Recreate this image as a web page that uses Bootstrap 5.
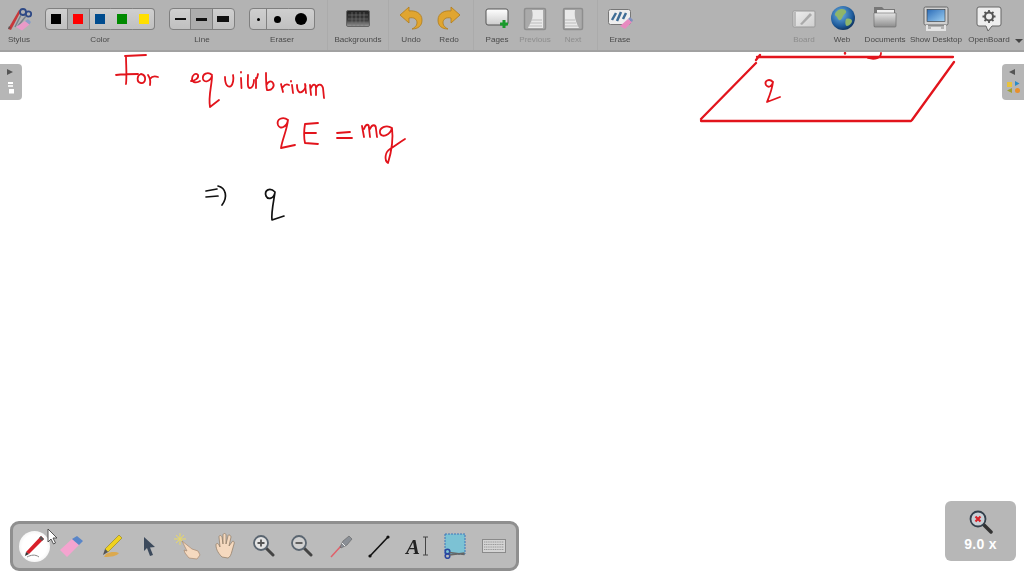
<!DOCTYPE html>
<html lang="en">
<head>
<meta charset="utf-8">
<title>OpenBoard</title>
<link href="https://cdn.jsdelivr.net/npm/bootstrap@5.3.0/dist/css/bootstrap.min.css" rel="stylesheet">
<style>
html,body{height:100%;margin:0;overflow:hidden;background:#fff}
body{font-family:"Liberation Sans",Arial,sans-serif}
.ob-stage{width:1024px;height:576px;position:relative}
.ob-top{height:52px;background:#b3b3b3;border-bottom:2px solid #a1a1a1}
.ob-tool{flex:0 0 auto;width:38px}
.ob-w60{width:60px}.ob-w48{width:48px}.ob-w54{width:54px}.ob-w52{width:52px}.ob-w110{width:110px}.ob-w66{width:66px}
.ob-slot{height:30px;margin-top:4px;display:flex;align-items:center;justify-content:center}
.ob-label{font-size:8.1px;line-height:12px;color:#4a4a4a;white-space:nowrap;text-align:center;filter:blur(.25px)}
.ob-off{color:#8d8d8d}
.ob-sep{flex:0 0 1px;height:50px;background:#ababab}
.ob-ml7{margin-left:7px}.ob-ml14{margin-left:14px}.ob-ml12{margin-left:12px}.ob-ml3{margin-left:3px}.ob-ml4{margin-left:4px}.ob-ml5{margin-left:5px}
.ob-seg{height:22px;padding:0;display:flex;align-items:center;justify-content:center;flex:1 1 0;border:1px solid #808080;background:linear-gradient(#cfcfcf,#c0c0c0);border-radius:4px;--bs-btn-active-bg:#adadad;--bs-btn-active-border-color:#808080}
.ob-seg.active{background:#adadad;border-color:#808080}
.ob-plain{border-left-color:transparent}
.btn-group>.ob-mid{border-right-color:transparent}
.ob-sw{display:block;width:10px;height:10px}
.ob-k{background:#000}.ob-r{background:#f00}.ob-b{background:#004c8f}.ob-g{background:#008a00}.ob-y{background:#ffdf00}
.ob-ln{display:block;width:11px;background:#111}
.ob-l1{height:2px}.ob-l2{height:3px}.ob-l3{height:6px;width:12px}
.ob-dot{display:block;border-radius:50%;background:#000}
.ob-d1{width:3px;height:3px}.ob-d2{width:7px;height:7px}.ob-d3{width:12px;height:12px}
.ob-more{flex:0 0 9px;padding-top:38px}
.ob-canvas{position:absolute;left:0;top:52px}
.ob-tab{position:absolute;top:64px;width:22px;height:36px;background:#b6b6b6}
.ob-tab-l{left:0;border-radius:0 4px 4px 0}
.ob-tab-r{right:0;border-radius:4px 0 0 4px}
.ob-dock{position:absolute;left:10px;top:521px;width:509px;height:50px;background:#bbb;border:3px solid #8f8f8f;border-radius:9px;padding-left:2px}
.ob-dtool{flex:0 0 38.3px;height:100%}
.ob-sel{width:31px;height:31px;border-radius:50%;background:radial-gradient(#fff 55%,#e4e4e4)}
.ob-cursor{position:absolute;left:47px;top:528px}
.ob-zoom{position:absolute;left:945px;top:501px;width:71px;height:60px;background:#b7b7b7;border-radius:6px;color:#fff;font-weight:700;font-size:14px}
.ob-zval{line-height:16px;margin-top:1px;letter-spacing:.3px}
.ob-soft{filter:blur(.35px)}
.ob-ink{filter:blur(.2px)}
</style>
</head>
<body>
<div class="ob-stage">
  <svg class="ob-canvas ob-ink" width="1024" height="524" viewBox="0 52 1024 524" fill="none" stroke-linecap="round" stroke-linejoin="round" role="img" aria-label="Handwritten ink on the board">
    <g stroke="#e2141c" stroke-width="1.800">
      <path d="M125 56L146 55M126 56C126 65 127 75 126 84M116 75Q125 74 138 74"/>
      <path d="M141 74C137 75 136 82 141 83C146 84 147 75 141 74M148 75C150 78 151 80 150 85M150 79C152 76 155 76 158 77"/>
      <path d="M191 81C195 81 199 78 198 75C196 72 192 75 192 79C192 83 197 83 200 81"/>
      <path d="M212 75C208 71 202 74 203 79C204 83 210 82 212 76C212 85 208 96 210 107L219 100"/>
      <path d="M225 77C225 85 228 88 231 86C233 84 234 79 233 75"/>
      <path d="M241 78L241.500 88M241 72L241 72.500M248 75C248 82 247 88 250 88C252 88 254 85 254 80M256 78L256 88M258 74L257 78"/>
      <path d="M266 73C266 80 266 86 267 90C272 91 275 86 273 83C271 80 268 82 267 84"/>
      <path d="M281 84L283 92M283 87C285 84 287 84 289 85M292 85L293 93M291 81L291 81.500"/>
      <path d="M297 85C297 92 300 94 303 91C305 89 306 86 305 84L306 93"/>
      <path d="M310 85L311 95M311 88C313 83 316 84 316 88L316 95M316 88C318 83 322 84 323 88L324 98"/>
      <path d="M288 120C283 116 276 119 278 125C280 130 287 127 288 120C287 130 282 140 281 148L295 145"/>
      <path d="M318 123L305 124C304 130 304 138 305 143L318 144M305 133L316 133"/>
      <path d="M337 133L350 132M337 138L352 138"/>
      <path d="M362 126L364 137M364 129C366 123 369 124 369 128L370 137M370 129C372 124 376 124 376 129L377 137"/>
      <path d="M392 128C386 124 379 128 380 133C381 138 390 136 392 128C393 136 392 150 388 163C384 160 385 152 390 149C395 146 400 142 405 139"/>
      <path d="M773 82C769 78 764 81 766 85C768 88 772 87 773 82C772 90 769 97 767 102L780 97"/>
      <path d="M881 53C881 58 875 60 868 58"/>
      <path d="M845 53L845 53.500" stroke-width="2.400"/>
      <path stroke-width="2.300" d="M757 57L953 57M756 63L701 119M701 121L911 121M954 62L912 120M760 55L756 60"/>
    </g>
    <g stroke="#111" stroke-width="1.700">
      <path d="M206 191L217 189M206 197L218 196M218 186C226 188 228 197 222 205"/>
      <path d="M275 192C270 187 264 190 266 196C268 200 274 199 275 192C274 200 271 212 272 220L284 216"/>
    </g>
  </svg>

  <nav class="ob-top d-flex align-items-start">
    <div class="ob-tool d-flex flex-column align-items-center">
      <div class="ob-slot"><svg class="ob-soft" width="26" height="26" viewBox="0 0 26 26"><path d="M2 23L13 4l2 1L5 24z" fill="#c8383a"/><path d="M2 23l1-3 2 2z" fill="#555"/><circle cx="17" cy="6" r="3" fill="none" stroke="#2f4a86" stroke-width="1.800"/><circle cx="22.500" cy="8" r="2.700" fill="none" stroke="#2f4a86" stroke-width="1.800"/><path d="M15 9l-6 12M20 10l-8 10" stroke="#77808c" stroke-width="1.500"/><path d="M10 21l9-6 4.500 3.500-7.500 6z" fill="#e99ac8"/><path d="M19 15l3-2 3 3-1.500 2.500z" fill="#8a9ec8"/></svg></div>
      <div class="ob-label">Stylus</div>
    </div>
    <div class="ob-tool ob-w110 ob-ml7 d-flex flex-column align-items-center">
      <div class="ob-slot w-100"><div class="btn-group w-100" role="group" aria-label="Color">
        <button class="btn ob-seg" type="button" aria-label="Black"><span class="ob-sw ob-k"></span></button>
        <button class="btn ob-seg active" type="button" aria-label="Red"><span class="ob-sw ob-r"></span></button>
        <button class="btn ob-seg ob-mid" type="button" aria-label="Blue"><span class="ob-sw ob-b"></span></button>
        <button class="btn ob-seg ob-mid ob-plain" type="button" aria-label="Green"><span class="ob-sw ob-g"></span></button>
        <button class="btn ob-seg ob-plain" type="button" aria-label="Yellow"><span class="ob-sw ob-y"></span></button>
      </div></div>
      <div class="ob-label">Color</div>
    </div>
    <div class="ob-tool ob-w66 ob-ml14 d-flex flex-column align-items-center">
      <div class="ob-slot w-100"><div class="btn-group w-100" role="group" aria-label="Line">
        <button class="btn ob-seg" type="button" aria-label="Thin"><span class="ob-ln ob-l1"></span></button>
        <button class="btn ob-seg active" type="button" aria-label="Medium"><span class="ob-ln ob-l2"></span></button>
        <button class="btn ob-seg" type="button" aria-label="Thick"><span class="ob-ln ob-l3"></span></button>
      </div></div>
      <div class="ob-label">Line</div>
    </div>
    <div class="ob-tool ob-w66 ob-ml14 d-flex flex-column align-items-center">
      <div class="ob-slot w-100"><div class="btn-group w-100" role="group" aria-label="Eraser">
        <button class="btn ob-seg" type="button" aria-label="Small"><span class="ob-dot ob-d1"></span></button>
        <button class="btn ob-seg ob-mid" type="button" aria-label="Medium"><span class="ob-dot ob-d2"></span></button>
        <button class="btn ob-seg ob-plain" type="button" aria-label="Large"><span class="ob-dot ob-d3"></span></button>
      </div></div>
      <div class="ob-label">Eraser</div>
    </div>
    <div class="ob-sep ob-ml12"></div>
    <div class="ob-tool ob-w60 d-flex flex-column align-items-center">
      <div class="ob-slot"><svg class="ob-soft" width="26" height="20" viewBox="0 0 26 20"><defs><linearGradient id="bgk" x1="0" y1="0" x2="0" y2="1"><stop offset="0" stop-color="#222"/><stop offset=".6" stop-color="#3c3c3c"/><stop offset="1" stop-color="#9a9a9a"/></linearGradient></defs><rect x="1.500" y="1.500" width="23" height="16" rx="1.500" fill="url(#bgk)" stroke="#666"/><path d="M3 6h20M3 10h20M3 14h20M7 3v14M11 3v14M15 3v14M19 3v14" stroke="#777" stroke-width=".6"/></svg></div>
      <div class="ob-label">Backgrounds</div>
    </div>
    <div class="ob-sep"></div>
    <div class="ob-tool ob-ml3 d-flex flex-column align-items-center">
      <div class="ob-slot"><svg class="ob-soft" width="24" height="26" viewBox="0 0 24 26"><path d="M10 1L1 9l9 8v-5c5-1 8 1 8 5 0 3-3 5-5 6 6 0 10-3 10-9 0-7-7-10-13-9z" fill="#e0a530" stroke="#b07c1c" stroke-width=".8"/></svg></div>
      <div class="ob-label">Undo</div>
    </div>
    <div class="ob-tool d-flex flex-column align-items-center">
      <div class="ob-slot"><svg class="ob-soft" width="24" height="26" viewBox="0 0 24 26"><path d="M14 1l9 8-9 8v-5c-5-1-8 1-8 5 0 3 3 5 5 6-6 0-10-3-10-9 0-7 7-10 13-9z" fill="#e0a530" stroke="#b07c1c" stroke-width=".8"/></svg></div>
      <div class="ob-label">Redo</div>
    </div>
    <div class="ob-sep ob-ml5"></div>
    <div class="ob-tool ob-ml4 d-flex flex-column align-items-center">
      <div class="ob-slot"><svg class="ob-soft" width="26" height="24" viewBox="0 0 26 24"><defs><linearGradient id="pg" x1="0" y1="0" x2="0" y2="1"><stop offset="0" stop-color="#fff"/><stop offset="1" stop-color="#ccc"/></linearGradient></defs><rect x="2" y="2" width="22" height="16" rx="2" fill="url(#pg)" stroke="#555"/><path d="M18.500 13h3v2.500H24v3h-2.500V21h-3v-2.500H16v-3h2.500z" fill="#1a9a2c"/></svg></div>
      <div class="ob-label">Pages</div>
    </div>
    <div class="ob-tool d-flex flex-column align-items-center">
      <div class="ob-slot"><svg class="ob-soft" width="24" height="24" viewBox="0 0 24 24"><rect x="1.500" y="1.500" width="21" height="21" rx="1.500" fill="#aaa" stroke="#8e8e8e" stroke-width="1.500"/><path d="M9 3h11v18H5c3-6 6-10 4-18z" fill="#e9e9e9"/><path d="M8 13h11M7 16h12M6 19h13" stroke="#bbb"/></svg></div>
      <div class="ob-label ob-off">Previous</div>
    </div>
    <div class="ob-tool d-flex flex-column align-items-center">
      <div class="ob-slot"><svg class="ob-soft" width="22" height="24" viewBox="0 0 22 24"><rect x="1.500" y="1.500" width="19" height="21" rx="1.500" fill="#aaa" stroke="#8e8e8e" stroke-width="1.500"/><path d="M3 3h10c-1 7 1 12 4 18H3z" fill="#e9e9e9"/><path d="M3 13h10M3 16h11M3 19h13" stroke="#bbb"/></svg></div>
      <div class="ob-label ob-off">Next</div>
    </div>
    <div class="ob-sep ob-ml5"></div>
    <div class="ob-tool ob-ml3 d-flex flex-column align-items-center">
      <div class="ob-slot"><svg class="ob-soft" width="26" height="22" viewBox="0 0 26 22"><rect x="1.500" y="1.500" width="22" height="15" rx="2" fill="#eee" stroke="#777"/><path d="M5 12l4-7M10 13l4-9M16 11l3-6" stroke="#3f6d96" stroke-width="2.500"/><path d="M13 18l8-7 4 3-7 7z" fill="#e88ac0"/><path d="M21 11l2-2 3 3-1 2z" fill="#7f8fc0"/></svg></div>
      <div class="ob-label">Erase</div>
    </div>

    <div class="ob-tool ms-auto d-flex flex-column align-items-center">
      <div class="ob-slot"><svg class="ob-soft" width="24" height="20" viewBox="0 0 24 20"><defs><linearGradient id="bd" x1="0" y1="0" x2="1" y2="1"><stop offset="0" stop-color="#eee"/><stop offset="1" stop-color="#cfcfcf"/></linearGradient></defs><rect x="1" y="2" width="22" height="16" rx="1" fill="url(#bd)" stroke="#999"/><path d="M8 15L18 4l2 2-10 10z" fill="#aaa"/><path d="M3 3v14" stroke="#bbb" stroke-width="2"/></svg></div>
      <div class="ob-label ob-off">Board</div>
    </div>
    <div class="ob-tool d-flex flex-column align-items-center">
      <div class="ob-slot"><svg class="ob-soft" width="26" height="26" viewBox="-1 1 26 26"><defs><radialGradient id="gl" cx=".4" cy=".35" r=".7"><stop offset="0" stop-color="#6eb2e6"/><stop offset=".7" stop-color="#1f5c9c"/><stop offset="1" stop-color="#0c2c55"/></radialGradient></defs><circle cx="13" cy="13" r="12" fill="url(#gl)"/><path d="M7 6c4-3 8-2 9 0s-2 3-3 5-2 5-4 4-1-3-3-4-1-3 1-5zM16 14c3-1 6 0 6 2s-3 5-5 5-2-5-1-7z" fill="#8fb56a"/></svg></div>
      <div class="ob-label">Web</div>
    </div>
    <div class="ob-tool ob-w48 d-flex flex-column align-items-center">
      <div class="ob-slot"><svg class="ob-soft" width="26" height="24" viewBox="0 3 26 24"><defs><linearGradient id="fd" x1="0" y1="0" x2="0" y2="1"><stop offset="0" stop-color="#e4e4e4"/><stop offset="1" stop-color="#8d8d8d"/></linearGradient></defs><path d="M2 3h8l2 2h11v18H2z" fill="#777"/><path d="M5 6h17v6H5z" fill="#f0f0f0"/><path d="M2 9h22v13a1 1 0 0 1-1 1H3a1 1 0 0 1-1-1z" fill="url(#fd)" stroke="#666" stroke-width=".6"/></svg></div>
      <div class="ob-label">Documents</div>
    </div>
    <div class="ob-tool ob-w54 d-flex flex-column align-items-center">
      <div class="ob-slot"><svg class="ob-soft" width="26" height="26" viewBox="0 0 26 26"><defs><linearGradient id="sc" x1="0" y1="0" x2="1" y2="1"><stop offset="0" stop-color="#2b6cb8"/><stop offset="1" stop-color="#9fd0f2"/></linearGradient></defs><rect x="1" y="1" width="24" height="18" rx="1.500" fill="#d0d0d0" stroke="#666"/><rect x="4" y="3.500" width="18" height="12" fill="url(#sc)" stroke="#333" stroke-width=".6"/><path d="M4 19v5h18v-5M8 22h10" fill="none" stroke="#e4e4e4" stroke-width="2"/></svg></div>
      <div class="ob-label">Show Desktop</div>
    </div>
    <div class="ob-tool ob-w52 d-flex flex-column align-items-center">
      <div class="ob-slot"><svg class="ob-soft" width="26" height="26" viewBox="0 0 26 26"><path d="M3 1h20a2 2 0 0 1 2 2v15a2 2 0 0 1-2 2h-7l-4 5-2-5H3a2 2 0 0 1-2-2V3a2 2 0 0 1 2-2z" fill="#eee" stroke="#666"/><circle cx="13" cy="10.500" r="4" fill="none" stroke="#555" stroke-width="2"/><path d="M13 4v2.500M13 14.500V17M6.500 10.500H9M17 10.500h2.500M8.500 6l1.700 1.700M15.800 13.300l1.700 1.700M17.500 6l-1.700 1.700M10.200 13.300L8.500 15" stroke="#555" stroke-width="1.800"/></svg></div>
      <div class="ob-label">OpenBoard</div>
    </div>
    <div class="ob-more"><svg class="d-block" width="8" height="6" viewBox="0 0 8 6"><path d="M0 1h8L4 5z" fill="#444"/></svg></div>
  </nav>

  <div class="ob-tab ob-tab-l d-flex flex-column align-items-center pt-1">
    <svg class="ob-soft" width="14" height="30" viewBox="0 0 14 30"><path d="M3 1l6 3-6 3z" fill="#555"/><rect x="4" y="14" width="5" height="2" fill="#fff"/><rect x="4" y="17" width="5" height="2" fill="#eee"/><rect x="5" y="21" width="5" height="4.500" fill="#fff"/></svg>
  </div>
  <div class="ob-tab ob-tab-r d-flex flex-column align-items-center pt-1">
    <svg class="ob-soft" width="18" height="30" viewBox="0 0 18 30"><path d="M11 1L5 4l6 3z" fill="#555"/><rect x="3" y="14" width="5" height="5" fill="#e8c23c"/><path d="M11 13l4.500 2.500L11 18z" fill="#2a8cc8"/><path d="M8 20v5l-5-2.500z" fill="#a0a030"/><circle cx="13.500" cy="22.500" r="2.500" fill="#e8902c"/></svg>
  </div>

  <div class="ob-dock d-flex align-items-center">
    <div class="ob-dtool d-flex align-items-center justify-content-center"><div class="ob-sel d-flex align-items-center justify-content-center"><svg class="ob-soft" width="26" height="26" viewBox="0 0 26 26"><path d="M5 19L20 3l3 3L8 21z" fill="#d8202a"/><path d="M18 5l2-2 3 3-2 2z" fill="#555"/><path d="M5 19l-1 4 4-2z" fill="#333"/><path d="M6 24c4-2 8-3 12 0" stroke="#888" fill="none"/></svg></div></div>
    <div class="ob-dtool d-flex align-items-center justify-content-center"><svg class="ob-soft" width="26" height="26" viewBox="0 0 26 26"><path d="M1 17L13 6l7 6L8 24z" fill="#f4a4cf"/><path d="M13 6l5-3 6 5-4 4z" fill="#5a86c8"/></svg></div>
    <div class="ob-dtool d-flex align-items-center justify-content-center"><svg class="ob-soft" width="26" height="26" viewBox="0 0 26 26"><path d="M8 21c5-3 11-2 13-1-2 3-8 4-15 4z" fill="#e3a534" opacity=".8"/><path d="M7 16L21 2l3 3L10 19z" fill="#f0d21e" stroke="#807010" stroke-width=".5"/><path d="M7 16l3 3-5 3z" fill="#555"/></svg></div>
    <div class="ob-dtool d-flex align-items-center justify-content-center"><svg class="ob-soft" width="14" height="20" viewBox="0 0 14 20"><path d="M2 1l11 10-5 .5L11 19l-3 1-3-8-3 3z" fill="#3c4a5c"/></svg></div>
    <div class="ob-dtool d-flex align-items-center justify-content-center"><svg class="ob-soft" width="30" height="28" viewBox="0 0 30 28"><path d="M8 1v12M2 7h12M4 3l8 8M12 3l-8 8" stroke="#e8d868" stroke-width="1"/><path d="M10 9l10 8 6 2 2 4-3 4-8-1-4-5-1-3 3 1z" fill="#f5d9bf" stroke="#a98a70" stroke-width=".7"/></svg></div>
    <div class="ob-dtool d-flex align-items-center justify-content-center"><svg class="ob-soft" width="24" height="26" viewBox="0 0 24 26"><path d="M8 24c-3-3-6-7-6-12 0-2 2-2 3 0l1 2-1-10c0-2 2-2 3 0l1 7V2c0-2 3-2 3 0v9l2-8c0-2 3-1 3 1l-2 9 3-4c1-2 3 0 2 2l-2 7c-1 4-2 6-4 7z" fill="#f5d9bf" stroke="#8e7862" stroke-width=".7"/></svg></div>
    <div class="ob-dtool d-flex align-items-center justify-content-center"><svg class="ob-soft" width="26" height="26" viewBox="0 0 26 26"><path d="M15 15l7 7" stroke="#444" stroke-width="3" stroke-linecap="round"/><circle cx="10" cy="10" r="7" fill="#e4e4e4" stroke="#5a6570" stroke-width="1.800"/><path d="M6.500 10h7M10 6.500v7" stroke="#555" stroke-width="1.800"/></svg></div>
    <div class="ob-dtool d-flex align-items-center justify-content-center"><svg class="ob-soft" width="26" height="26" viewBox="0 0 26 26"><path d="M15 15l7 7" stroke="#444" stroke-width="3" stroke-linecap="round"/><circle cx="10" cy="10" r="7" fill="#d0d0d0" stroke="#5a6570" stroke-width="1.800"/><path d="M6.500 10h7" stroke="#555" stroke-width="1.800"/></svg></div>
    <div class="ob-dtool d-flex align-items-center justify-content-center"><svg class="ob-soft" width="26" height="26" viewBox="0 0 26 26"><path d="M3 24l10-11" stroke="#e0606a" stroke-width="1.500"/><path d="M12 14l3-6 6-5 3 3-5 6-6 3z" fill="#8a8f96" stroke="#555" stroke-width=".5"/><path d="M14 10l3 3" stroke="#eee"/></svg></div>
    <div class="ob-dtool d-flex align-items-center justify-content-center"><svg width="24" height="24" viewBox="0 0 24 24"><path d="M3 22L21 3" stroke="#111" stroke-width="1.600"/><circle cx="3" cy="22" r="1.600" fill="#111"/><circle cx="21" cy="3" r="1.600" fill="#111"/></svg></div>
    <div class="ob-dtool d-flex align-items-center justify-content-center"><svg class="ob-soft" width="30" height="24" viewBox="0 0 30 24"><text x="4" y="20" font-family="Liberation Serif,serif" font-weight="700" font-style="italic" font-size="21" fill="#222">A</text><path d="M21 3h5M21 21h5M23.500 3v18" stroke="#444" fill="none"/></svg></div>
    <div class="ob-dtool d-flex align-items-center justify-content-center"><svg class="ob-soft" width="24" height="26" viewBox="0 0 24 26"><rect x="2" y="1" width="20" height="20" fill="#7cc2d4" stroke="#3c74b8" stroke-dasharray="2 1"/><circle cx="4.500" cy="18.500" r="2.300" fill="none" stroke="#2a46a0" stroke-width="1.600"/><circle cx="4.500" cy="23" r="2.300" fill="none" stroke="#2a46a0" stroke-width="1.600"/><path d="M6.500 19.500l15 2M6.500 22l15-2" stroke="#666" stroke-width="1.300"/></svg></div>
    <div class="ob-dtool d-flex align-items-center justify-content-center"><svg class="ob-soft" width="24" height="14" viewBox="0 0 24 14"><rect x=".5" y=".5" width="23" height="13" fill="#d4d4d4" stroke="#8a8a8a"/><path d="M2 3h20M2 5.500h20M2 8h20M2 10.500h20" stroke="#8a8a8a" stroke-width=".8" stroke-dasharray="1.200 .6"/></svg></div>
  </div>
  <svg class="ob-cursor" width="11" height="17" viewBox="0 0 11 17"><path d="M1 1v13l3-3 2.500 5 2-1L6 10h4z" fill="#fff" stroke="#444" stroke-width=".9"/></svg>

  <div class="ob-zoom d-flex flex-column align-items-center">
    <svg class="ob-soft mt-2" width="26" height="26" viewBox="0 0 26 26"><path d="M15 15l8 8" stroke="#333" stroke-width="3.500" stroke-linecap="round"/><circle cx="10" cy="10" r="7.500" fill="#c9d0d6" stroke="#34404c" stroke-width="1.800"/><path d="M7.500 7.500l5 5M12.500 7.500l-5 5" stroke="#d8232a" stroke-width="2.200"/></svg>
    <div class="ob-zval">9.0 x</div>
  </div>
</div>
<script src="https://cdn.jsdelivr.net/npm/bootstrap@5.3.0/dist/js/bootstrap.bundle.min.js"></script>
</body>
</html>
